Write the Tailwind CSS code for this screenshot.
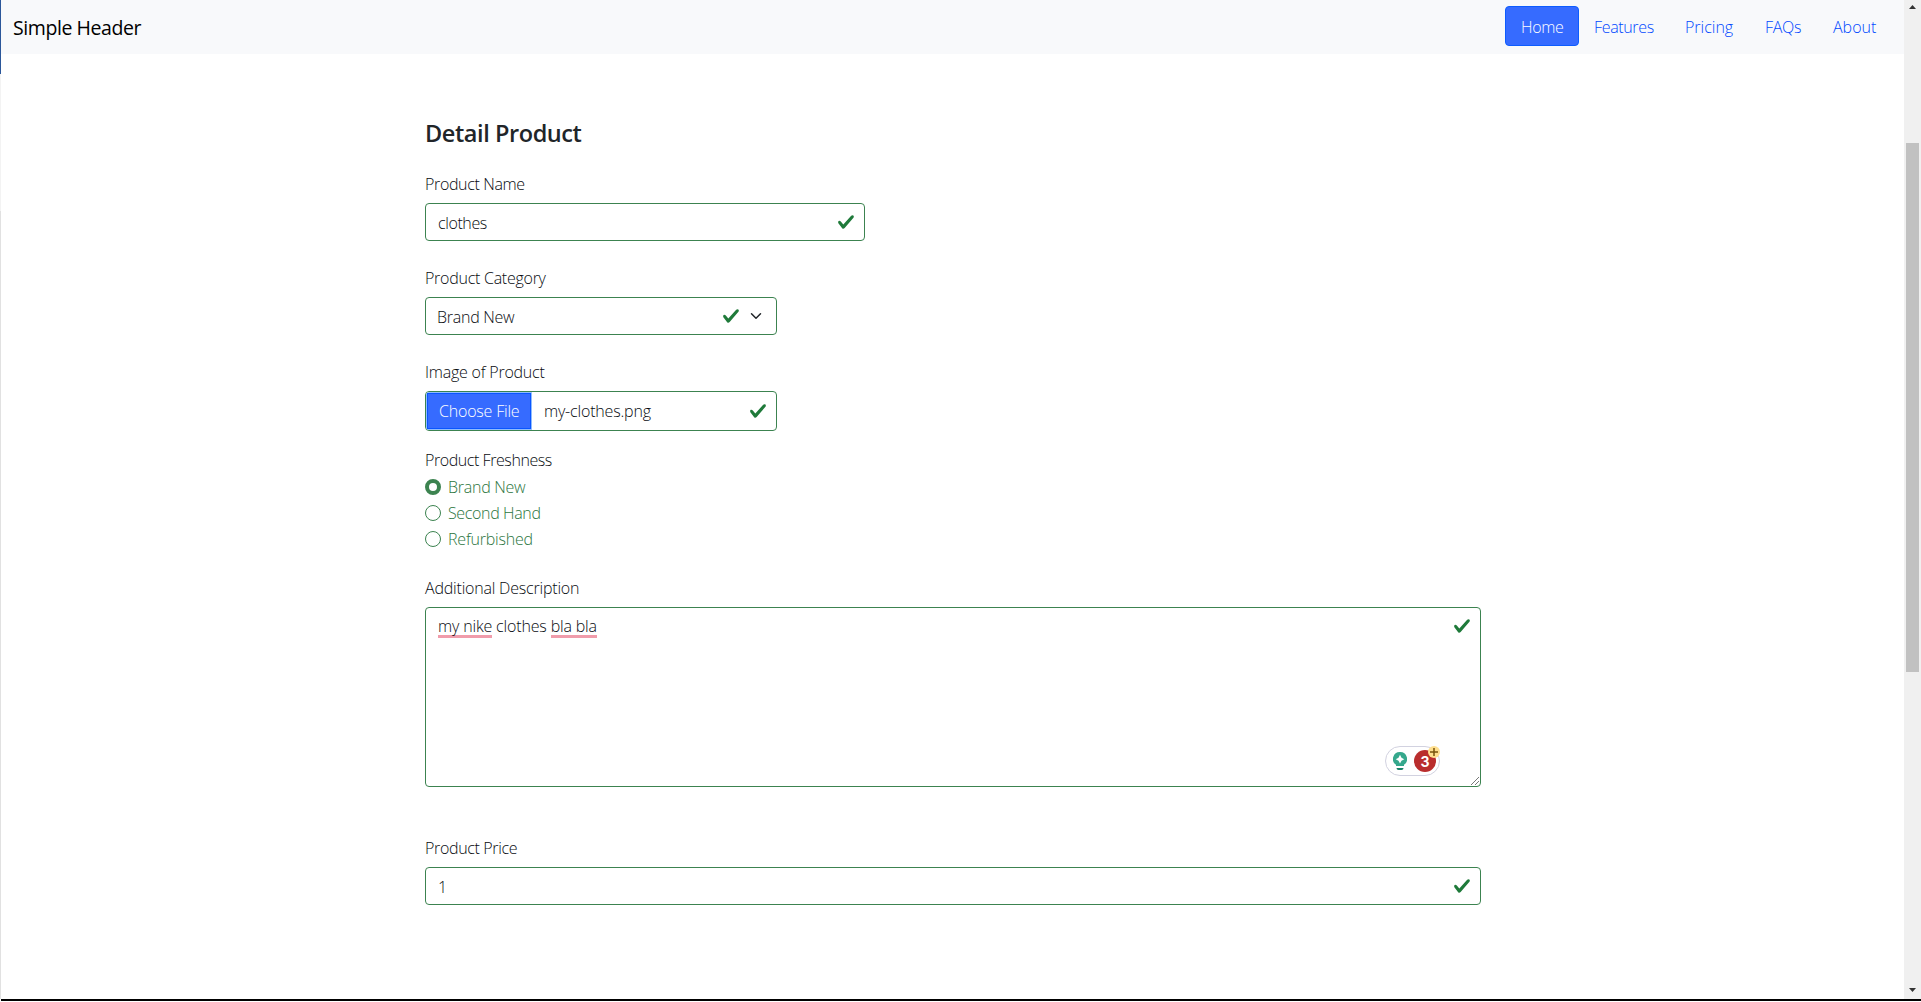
<!DOCTYPE html>
<html lang="en">
<head>
<meta charset="utf-8">
<title>Detail Product</title>
<script src="https://cdn.jsdelivr.net/npm/@tailwindcss/browser@4"></script>
</head>
<body class="flex h-[1002px] w-[1921px] flex-col overflow-hidden bg-white font-['Open_Sans','Noto_Sans',sans-serif] text-base font-light text-[#080b10]">
<svg class="hidden">
  <symbol id="check" viewBox="0 0 8 8"><path fill="#1f7a3a" d="M2.3 6.73.6 4.53c-.4-1.04.46-1.4 1.1-.8l1.1 1.4 3.4-3.8c.6-.63 1.6-.27 1.2.7l-4 4.6c-.43.5-.8.4-1.1.1z"/></symbol>
</svg>
<div class="flex h-[999px] shrink-0">
  <div class="flex w-px shrink-0 flex-col">
    <div class="h-[74px] bg-[#2b579a]"></div>
    <div class="h-[137px] bg-[#f3f3f3]"></div>
    <div class="flex-1 bg-[#e1e1e1]"></div>
  </div>
  <div class="w-[1903px] shrink-0">
    <header class="flex h-[54px] justify-between bg-[#f8f9fb] pl-3 pr-[11px] pt-[6px]">
      <a class="mt-[7px] whitespace-nowrap text-[19.5px] leading-[30px] tracking-[-0.42px] font-normal text-black">Simple Header</a>
      <nav class="flex h-10 whitespace-nowrap leading-[26px] text-[#0048ff] [&>a]:py-2 [&>a]:pl-[15px]">
        <a class="w-[74px] rounded-[4px] border border-[#0d5cff] bg-[#366bff] !py-[7px] !pl-[15px] tracking-[-0.3px] text-white">Home</a>
        <a class="w-[91px] tracking-[-0.35px]">Features</a>
        <a class="w-20">Pricing</a>
        <a class="w-[68px] tracking-[-0.3px]">FAQs</a>
        <a class="w-[75px]">About</a>
      </nav>
    </header>
    <main class="ml-[424px] w-[1056px] pt-[65px] leading-6 [&_label]:block [&_label]:h-6 [&_label]:leading-[26px]">
      <h1 class="h-[52px] text-[23.5px] leading-[29px] font-semibold tracking-[-0.42px] text-[#212529]">Detail Product</h1>

      <label class="tracking-[-0.35px]">Product Name</label>
      <div class="mt-2 flex h-[38px] w-[440px] items-center justify-between rounded-[4px] border border-[#3c8350] pl-3 pr-[9px]">
        <span class="pt-px tracking-[-0.4px]">clothes</span>
        <svg class="size-[18px]"><use href="#check"/></svg>
      </div>

      <label class="mt-6 tracking-[-0.26px]">Product Category</label>
      <div class="mt-2 flex h-[38px] w-[352px] items-center rounded-[4px] border border-[#3c8350] pl-[11px] pr-3">
        <span class="flex-1 pt-px tracking-[-0.26px]">Brand New</span>
        <svg class="size-[18px]"><use href="#check"/></svg>
        <svg class="ml-2 h-3 w-4" viewBox="0 0 16 16" fill="none" stroke="#212529" stroke-width="2" stroke-linecap="round" stroke-linejoin="round"><path d="m2 5 6 6 6-6"/></svg>
      </div>

      <label class="mt-6 tracking-[-0.22px]">Image of Product</label>
      <div class="mt-2 flex h-10 w-[352px] items-center rounded-[4px] border border-[#3c8350] pr-[9px]">
        <span class="h-[38px] w-[106px] rounded-l-[3px] border border-[#8fbcff] bg-[#366bff]">
          <span class="block h-9 border border-[#0a55ff] pl-[11px] leading-[34px] tracking-[-0.2px] text-white">Choose File</span>
        </span>
        <span class="flex-1 pl-3 tracking-[-0.18px]">my-clothes.png</span>
        <svg class="size-[18px]"><use href="#check"/></svg>
      </div>

      <label class="mt-4 tracking-[-0.43px]">Product Freshness</label>
      <div class="mt-1 flex flex-col gap-[2px] text-[#2b7540]">
        <div class="flex items-center gap-[7px]"><span class="size-4 rounded-full border-[4.5px] border-[#3c8350] bg-white"></span><span class="tracking-[-0.26px]">Brand New</span></div>
        <div class="flex items-center gap-[7px]"><span class="size-4 rounded-full border border-[#3c8350]"></span><span class="tracking-[-0.36px]">Second Hand</span></div>
        <div class="flex items-center gap-[7px]"><span class="size-4 rounded-full border border-[#3c8350]"></span><span class="tracking-[-0.2px]">Refurbished</span></div>
      </div>

      <label class="mt-6 tracking-[-0.2px]">Additional Description</label>
      <div class="relative mt-2 flex h-[180px] justify-between rounded-[4px] border border-[#3c8350] pl-3 pr-[9px] pt-[6px]">
        <p class="tracking-[-0.16px]"><span class="inline-block h-[24px] border-b-3 border-[#f09cab]">my nike</span> clothes <span class="inline-block h-[24px] border-b-3 border-[#f09cab]">bla bla</span></p>
        <svg class="mt-[3px] size-[18px]"><use href="#check"/></svg>
        <div class="absolute bottom-[10px] right-[40px] flex h-[30px] w-[55px] items-center rounded-full border border-[#d2d2e0] bg-white pl-[7px]">
          <svg class="mt-px h-[19px] w-[14px]" viewBox="0 0 14 19"><path fill="#35a88c" d="M7 0a7 7 0 0 0-4 12.8V14h8v-1.200A7 7 0 0 0 7 0z"/><path fill="#fff" d="M7 2.800 8.500 5.700 11.300 7.200 8.500 8.700 7 11.500 5.500 8.700 2.700 7.200 5.500 5.700z"/><path fill="#168166" d="M3.500 16h7q0 2-2 2h-3q-2 0-2-2z"/></svg>
          <span class="ml-[7px] flex size-[22px] items-center justify-center rounded-full bg-[#b92d2d] pt-[2px] font-['Inter',sans-serif] text-[14px] font-bold text-white">3</span>
          <svg class="absolute -right-px -top-px size-3" viewBox="0 0 12 12"><circle cx="6" cy="6" r="6" fill="#ffdf8e"/><path stroke="#78530b" stroke-width="1.500" d="M6 2v8M2 6h8"/></svg>
        </div>
        <svg class="absolute bottom-px right-px size-2" viewBox="0 0 8 8" stroke="#555" stroke-width=".8"><path d="M0 8 8 0M4 8l4-4"/></svg>
      </div>

      <label class="mt-12 tracking-[-0.34px]">Product Price</label>
      <div class="mt-2 flex h-[38px] items-center justify-between rounded-[4px] border border-[#3c8350] pl-3 pr-[9px]">
        <span class="pt-px">1</span>
        <svg class="size-[18px]"><use href="#check"/></svg>
      </div>
    </main>
  </div>
  <div class="flex w-[17px] flex-col items-center bg-[#f0f0f0]">
    <svg class="mt-[5px] h-1 w-[7px] shrink-0" viewBox="0 0 7 4"><path fill="#333" d="M0 4h7L3.500 0z"/></svg>
    <div class="mt-[134px] h-[529px] w-[13px] shrink-0 bg-[#c1c1c1]"></div>
    <svg class="mb-[7px] mt-auto h-1 w-[7px] shrink-0" viewBox="0 0 7 4"><path fill="#333" d="M0 0h7L3.500 4z"/></svg>
  </div>
</div>
<div class="ml-px h-[2px] shrink-0 bg-black"></div>
</body>
</html>
